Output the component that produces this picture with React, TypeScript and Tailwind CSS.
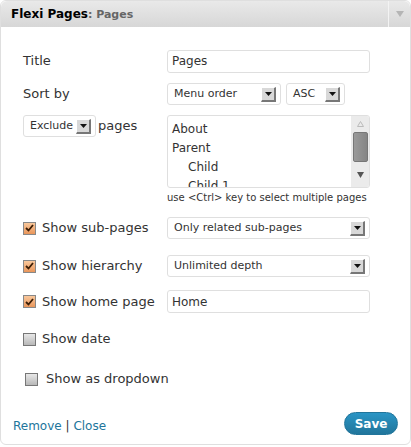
import React from 'react';

const font = "font-['DejaVu_Sans',Verdana,sans-serif]";

function Arrow() {
  return (
    <span className="flex h-[15px] w-[15px] items-center justify-center border-b-2 border-r-2 border-t border-l border-b-[#777] border-r-[#777] border-t-white border-l-white bg-[#d8d8d8]">
      <svg width="7" height="4" viewBox="0 0 7 4">
        <path d="M0 0h7L3.5 4z" fill="#111" />
      </svg>
    </span>
  );
}

function Select({ label, className }: { label: string; className: string }) {
  return (
    <div
      className={`flex h-[22px] items-center justify-between rounded-[3px] border border-[#dfdfdf] bg-white pl-[6px] pr-[4px] text-[11px] text-[#333] ${className}`}
    >
      <span>{label}</span>
      <Arrow />
    </div>
  );
}

function Check({ checked }: { checked: boolean }) {
  return checked ? (
    <span className="flex h-[13px] w-[13px] items-center justify-center border border-[#888] bg-gradient-to-b from-[#f9c89c] to-[#e9965a]">
      <svg width="9" height="8" viewBox="0 0 9 8">
        <path d="M1 4l2.5 2.5L8 1" stroke="#3b1d05" strokeWidth="1.8" fill="none" />
      </svg>
    </span>
  ) : (
    <span className="h-[13px] w-[13px] border border-[#777] bg-gradient-to-b from-[#e8e8e8] to-[#b8b8b8]" />
  );
}

export default function App() {
  const pages = [
    { name: 'About', indent: false },
    { name: 'Parent', indent: false },
    { name: 'Child', indent: true },
    { name: 'Child 1', indent: true },
  ];

  return (
    <div className={`h-[447px] w-[411px] bg-white ${font}`}>
      <div className="flex h-[445px] flex-col rounded-[6px] border border-[#dfdfdf]">
        <div className="flex h-[26px] items-center justify-between rounded-t-[6px] bg-gradient-to-b from-[#e9e9e9] to-[#d7d7d7]">
          <div className="pl-[10px] text-[12px] font-bold text-black">
            Flexi Pages<span className="text-[11px] text-[#666]">: Pages</span>
          </div>
          <div className="flex h-full w-[22px] items-center justify-center border-l border-l-[#f3f3f3]">
            <svg width="8" height="6" viewBox="0 0 8 6">
              <path d="M0 0h8L4 6z" fill="#b5b5b5" />
            </svg>
          </div>
        </div>

        <div className="flex flex-1 flex-col pl-[22px] pr-[40px] pt-[23px] text-[13px] text-[#333]">
          <div className="flex h-[22px] items-center">
            <span className="w-[144px]">Title</span>
            <div className="flex h-[23px] flex-1 items-center rounded-[3px] border border-[#dfdfdf] px-[4px] text-[12px]">
              Pages
            </div>
          </div>

          <div className="mt-[11px] flex h-[22px] items-center">
            <span className="w-[144px]">Sort by</span>
            <Select label="Menu order" className="w-[114px]" />
            <Select label="ASC" className="ml-[5px] w-[59px]" />
          </div>

          <div className="mt-[10px] flex">
            <div className="flex w-[144px] items-start">
              <Select label="Exclude" className="w-[73px]" />
              <span className="ml-[2px] leading-[22px]">pages</span>
            </div>
            <div className="flex flex-1 flex-col">
              <div className="flex h-[73px] overflow-hidden rounded-[3px] border border-[#dfdfdf]">
                <div className="flex-1 overflow-hidden pl-[4px] pt-[4px] text-[12px] leading-[19px]">
                  {pages.map((p) => (
                    <div key={p.name} className={p.indent ? 'pl-[16px]' : ''}>
                      {p.name}
                    </div>
                  ))}
                </div>
                <div className="flex w-[18px] flex-col items-center bg-[#ebebeb]">
                  <svg className="mt-[5px]" width="7" height="6" viewBox="0 0 7 6">
                    <path d="M3.5 0.5L6.5 5.5h-6z" fill="none" stroke="#bbb" />
                  </svg>
                  <div className="mt-[5px] h-[30px] w-[15px] rounded-[2px] border border-[#777] bg-gradient-to-r from-[#9a9a9a] to-[#858585]" />
                  <svg className="mt-[10px]" width="7" height="6" viewBox="0 0 7 6">
                    <path d="M0 0h7L3.5 6z" fill="#555" />
                  </svg>
                </div>
              </div>
              <div className="mt-[2px] text-[10px] text-[#333]">use &lt;Ctrl&gt; key to select multiple pages</div>
            </div>
          </div>

          <div className="mt-[12px] flex h-[22px] items-center">
            <span className="flex w-[144px] items-center gap-[6px]">
              <Check checked />
              Show sub-pages
            </span>
            <Select label="Only related sub-pages" className="flex-1" />
          </div>

          <div className="mt-[16px] flex h-[22px] items-center">
            <span className="flex w-[144px] items-center gap-[6px]">
              <Check checked />
              Show hierarchy
            </span>
            <Select label="Unlimited depth" className="flex-1" />
          </div>

          <div className="mt-[13px] flex h-[23px] items-center">
            <span className="flex w-[144px] items-center gap-[6px]">
              <Check checked />
              Show home page
            </span>
            <div className="flex h-[23px] flex-1 items-center rounded-[3px] border border-[#dfdfdf] px-[4px] text-[12px]">
              Home
            </div>
          </div>

          <div className="mt-[15px] flex h-[22px] items-center gap-[6px]">
            <Check checked={false} />
            Show date
          </div>

          <div className="mt-[18px] flex h-[22px] items-center gap-[8px] pl-[2px]">
            <Check checked={false} />
            Show as dropdown
          </div>
        </div>

        <div className="flex items-center justify-between pb-[9px] pl-[12px] pr-[12px] text-[12px]">
          <div className="pt-[4px] text-[#21759b]">
            Remove <span className="text-[#333]">|</span> Close
          </div>
          <button
            type="button"
            className="h-[23px] w-[54px] rounded-full border border-[#21759b] bg-gradient-to-b from-[#2a95c5] to-[#21759b] text-[12px] font-bold text-white"
          >
            Save
          </button>
        </div>
      </div>
    </div>
  );
}
